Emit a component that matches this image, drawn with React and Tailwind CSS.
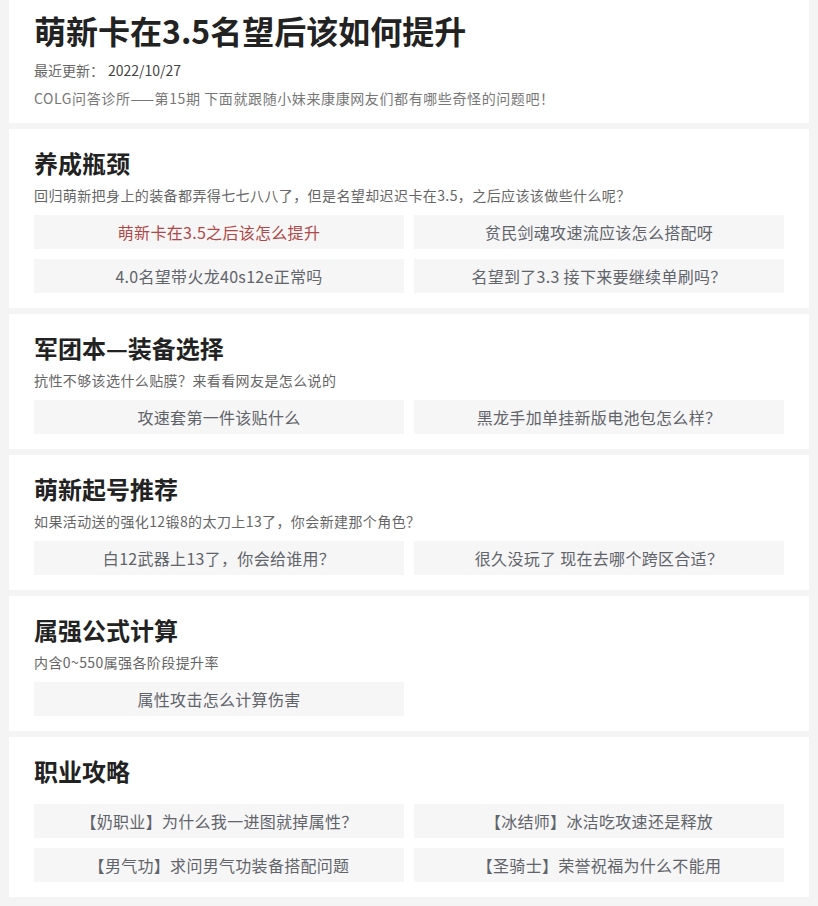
const sections = [
  {
    title: "养成瓶颈",
    desc: "回归萌新把身上的装备都弄得七七八八了，但是名望却迟迟卡在3.5，之后应该该做些什么呢？",
    links: [
      { text: "萌新卡在3.5之后该怎么提升", active: true },
      { text: "贫民剑魂攻速流应该怎么搭配呀" },
      { text: "4.0名望带火龙40s12e正常吗" },
      { text: "名望到了3.3 接下来要继续单刷吗？" },
    ],
  },
  {
    title: "军团本—装备选择",
    desc: "抗性不够该选什么贴膜？来看看网友是怎么说的",
    links: [{ text: "攻速套第一件该贴什么" }, { text: "黑龙手加单挂新版电池包怎么样？" }],
  },
  {
    title: "萌新起号推荐",
    desc: "如果活动送的强化12锻8的太刀上13了，你会新建那个角色？",
    links: [{ text: "白12武器上13了，你会给谁用？" }, { text: "很久没玩了 现在去哪个跨区合适？" }],
  },
  {
    title: "属强公式计算",
    desc: "内含0~550属强各阶段提升率",
    links: [{ text: "属性攻击怎么计算伤害" }],
  },
  {
    title: "职业攻略",
    desc: "",
    links: [
      { text: "【奶职业】为什么我一进图就掉属性？" },
      { text: "【冰结师】冰洁吃攻速还是释放" },
      { text: "【男气功】求问男气功装备搭配问题" },
      { text: "【圣骑士】荣誉祝福为什么不能用" },
    ],
  },
];

const Section = ({ title, desc, links }) => (
  <div className="bg-white px-[25px] pt-5 pb-[15px]">
    <h2 className="text-[24px] leading-[28px] font-bold text-[#222]">{title}</h2>
    {desc ? (
      <p className="mt-2 text-[14px] leading-5 tracking-[0.4px] text-[#666]">{desc}</p>
    ) : null}
    <div className={`grid grid-cols-2 gap-[10px] ${desc ? "mt-[10px]" : "mt-[19px]"}`}>
      {links.map((l) => (
        <div
          key={l.text}
          className={`h-[34px] bg-[#f6f6f6] flex items-center justify-center text-[16px] tracking-[0.3px] ${
            l.active ? "text-[#b04848]" : "text-[#61646b]"
          }`}
        >
          {l.text}
        </div>
      ))}
    </div>
  </div>
);

export default function App() {
  return (
    <div
      className="min-h-[906px] bg-[#f4f4f4] pl-[9px] pr-[9px]"
      style={{ fontFamily: '"Noto Sans CJK SC", "Noto Sans", sans-serif' }}
    >
      <div className="flex flex-col gap-[6px]">
        <div className="bg-white px-[25px] pt-[10px] pb-[15px]">
          <h1 className="text-[32px] leading-[40px] font-bold text-[#222]">萌新卡在3.5名望后该如何提升</h1>
          <div className="mt-[10px] text-[14px] leading-5 text-[#666]">
            最近更新：<span className="ml-1 text-[#444]">2022/10/27</span>
          </div>
          <p className="mt-2 text-[14px] leading-5 tracking-[0.6px] text-[#777]">
            COLG问答诊所——第15期 下面就跟随小妹来康康网友们都有哪些奇怪的问题吧！
          </p>
        </div>
        {sections.map((s) => (
          <Section key={s.title} {...s} />
        ))}
      </div>
    </div>
  );
}
